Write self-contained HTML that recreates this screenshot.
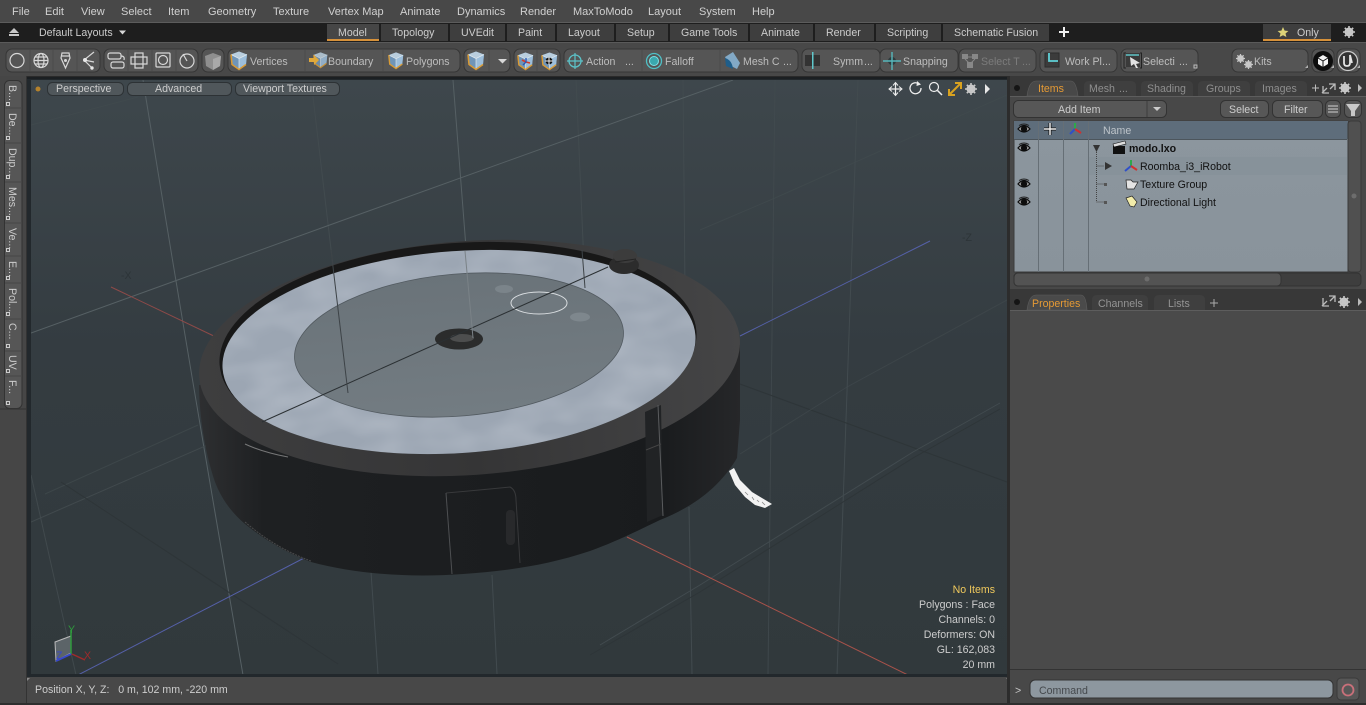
<!DOCTYPE html>
<html><head><meta charset="utf-8"><title>Modo</title>
<style>
html,body{margin:0;padding:0;background:#484848;overflow:hidden}
svg{display:block}
text{font-family:"Liberation Sans",sans-serif;font-size:10.6px;white-space:pre}
text:not([fill]):not([class]){fill:#cdcdcd}
.m{fill:#d0d0d0;font-size:11px}
.tb{fill:#bdbdbd}
.dim{fill:#7c7c7c}
.tab{fill:#cccccc}
.grp{fill:#555;stroke:#363636;stroke-width:1}
.sep{stroke:#4b4b4b;stroke-width:1}
.g{stroke:#566064;stroke-width:1;fill:none}
.gf{stroke:#424b4f;stroke-width:1;fill:none}
.gd{stroke:#2e3538;stroke-width:1;fill:none}
.ic{fill:none;stroke:#d8d8d8;stroke-width:1.2}
.r{fill:#111}
</style></head><body>
<svg width="1366" height="705" viewBox="0 0 1366 705" xmlns="http://www.w3.org/2000/svg">
<defs>
<linearGradient id="vp" x1="0" y1="0" x2="0" y2="1"><stop offset="0" stop-color="#3e474c"/><stop offset=".45" stop-color="#343c41"/><stop offset="1" stop-color="#31393c"/></linearGradient>
<linearGradient id="side" x1="0" y1="0" x2="1" y2="0"><stop offset="0" stop-color="#2e2f31"/><stop offset=".12" stop-color="#1e2022"/><stop offset=".85" stop-color="#191b1d"/><stop offset="1" stop-color="#262729"/></linearGradient>
<linearGradient id="rim" x1="0" y1="0" x2="1" y2="0"><stop offset="0" stop-color="#3e3e3f"/><stop offset=".5" stop-color="#353536"/><stop offset="1" stop-color="#454546"/></linearGradient>
<linearGradient id="disk" x1="0" y1="0" x2="0" y2="1"><stop offset="0" stop-color="#6a7379"/><stop offset="1" stop-color="#737c82"/></linearGradient>
<filter id="mot" x="0" y="0" width="1" height="1"><feTurbulence type="fractalNoise" baseFrequency=".02 .04" numOctaves="2" seed="4"/><feColorMatrix values="0 0 0 0 .72 0 0 0 0 .76 0 0 0 0 .82 0 0 0 .5 -.17"/><feComposite in2="SourceGraphic" operator="in"/></filter>
<linearGradient id="tbl" x1="0" y1="0" x2="0" y2="1"><stop offset="0" stop-color="#8c969e"/><stop offset="1" stop-color="#89939b"/></linearGradient>
<symbol id="cube" viewBox="0 0 20 20" overflow="visible">
<polygon points="10,1 18,4 17,14 10,19 3,14 2,4" fill="#6f95b8"/>
<polygon points="10,8 18,4 17,14 10,19" fill="#9cbedb"/>
<polygon points="10,1 18,4 10,8 2,4" fill="#b9cede"/>
<path d="M10,8 L10,19 M10,8 L2,4 M10,8 L18,4" stroke="#dfe8ee" stroke-width=".7" fill="none"/>
<path d="M2,4 L3,14 L10,19 L17,14" stroke="#d99b35" stroke-width="1.5" fill="none"/>
</symbol>
<symbol id="eye" viewBox="0 0 14 10" overflow="visible">
<path d="M1,5 Q7,-2 13,5 Q7,11 1,5Z" fill="#a8a8a8" stroke="#0d0d0d" stroke-width="1.2"/>
<circle cx="7" cy="5" r="3.200" fill="#0d0d0d"/><path d="M2,1.500Q7,-1.500 12,1.500" stroke="#222" fill="none"/>
</symbol>
<symbol id="gear" viewBox="0 0 12 12" overflow="visible">
<circle cx="6" cy="6" r="3.400" fill="none" stroke="#c8c8c8" stroke-width="2.200"/>
<path d="M6,0V12M0,6H12M1.800,1.800L10.200,10.200M10.200,1.800L1.800,10.200" stroke="#c8c8c8" stroke-width="1.600"/>
</symbol>
</defs>

<!-- base -->
<rect width="1366" height="705" fill="#484848"/>
<rect x="0" y="22" width="1366" height="1" fill="#5c5c5c"/>

<!-- menu -->
<g>
<text class="m" x="12" y="15">File</text>
<text class="m" x="45" y="15">Edit</text>
<text class="m" x="81" y="15">View</text>
<text class="m" x="121" y="15">Select</text>
<text class="m" x="168" y="15">Item</text>
<text class="m" x="208" y="15">Geometry</text>
<text class="m" x="273" y="15">Texture</text>
<text class="m" x="328" y="15">Vertex Map</text>
<text class="m" x="400" y="15">Animate</text>
<text class="m" x="457" y="15">Dynamics</text>
<text class="m" x="520" y="15">Render</text>
<text class="m" x="573" y="15">MaxToModo</text>
<text class="m" x="648" y="15">Layout</text>
<text class="m" x="699" y="15">System</text>
<text class="m" x="752" y="15">Help</text>
</g>

<!-- tab bar -->
<rect x="0" y="23" width="1366" height="19" fill="#1e1e1e"/>
<rect x="0" y="42" width="1366" height="1" fill="#5a5a5a"/>
<path d="M14,28 L19,33 H9Z M9,34H19V36H9Z" fill="#c8c8c8"/>
<text class="tab" x="39" y="36">Default Layouts</text>
<path d="M119,30.500H126L122.500,34.500Z" fill="#d8d8d8"/>
<rect x="327" y="24" width="52" height="15" fill="#464646"/>
<rect x="327" y="39" width="52" height="2" fill="#d6913a"/>
<g fill="#3e3e3e">
<rect x="381" y="24" width="67" height="17"/>
<rect x="450" y="24" width="55" height="17"/>
<rect x="507" y="24" width="48" height="17"/>
<rect x="557" y="24" width="57" height="17"/>
<rect x="616" y="24" width="52" height="17"/>
<rect x="670" y="24" width="78" height="17"/>
<rect x="750" y="24" width="63" height="17"/>
<rect x="815" y="24" width="59" height="17"/>
<rect x="876" y="24" width="65" height="17"/>
<rect x="943" y="24" width="106" height="17"/>
</g>
<text class="tab" x="338" y="36">Model</text>
<text class="tab" x="392" y="36">Topology</text>
<text class="tab" x="461" y="36">UVEdit</text>
<text class="tab" x="518" y="36">Paint</text>
<text class="tab" x="568" y="36">Layout</text>
<text class="tab" x="627" y="36">Setup</text>
<text class="tab" x="681" y="36">Game Tools</text>
<text class="tab" x="761" y="36">Animate</text>
<text class="tab" x="826" y="36">Render</text>
<text class="tab" x="887" y="36">Scripting</text>
<text class="tab" x="954" y="36">Schematic Fusion</text>
<path d="M1064,27V37M1059,32H1069" stroke="#f0f0f0" stroke-width="2"/>
<rect x="1263" y="24" width="68" height="15" fill="#3e3e3e"/>
<rect x="1263" y="39" width="68" height="2" fill="#d6913a"/>
<path d="M1283,27L1284.600,30.600L1288.400,31L1285.500,33.500L1286.400,37L1283,35.200L1279.600,37L1280.500,33.500L1277.600,31L1281.400,30.600Z" fill="#dcd277"/>
<text class="tab" x="1297" y="36">Only</text>
<use href="#gear" x="1343" y="26" width="12" height="12"/>

<!-- toolbar -->
<rect x="0" y="43" width="1366" height="33" fill="#484848"/>
<rect x="0" y="76" width="1366" height="3" fill="#2a2a2a"/>
<g>
<rect class="grp" x="6" y="49" width="94" height="23" rx="6"/>
<rect class="grp" x="104" y="49" width="94" height="23" rx="6"/>
<rect class="grp" x="202" y="49" width="22" height="23" rx="6"/>
<rect class="grp" x="228" y="49" width="232" height="23" rx="6"/>
<rect class="grp" x="464" y="49" width="46" height="23" rx="6"/>
<rect class="grp" x="514" y="49" width="46" height="23" rx="6"/>
<rect class="grp" x="564" y="49" width="234" height="23" rx="6"/>
<rect class="grp" x="802" y="49" width="78" height="23" rx="6"/>
<rect class="grp" x="880" y="49" width="78" height="23" rx="6"/>
<rect class="grp" x="959" y="49" width="77" height="23" rx="6"/>
<rect class="grp" x="1040" y="49" width="77" height="23" rx="6"/>
<rect class="grp" x="1121" y="49" width="77" height="23" rx="6"/>
<rect class="grp" x="1232" y="49" width="76" height="23" rx="6"/>
<rect class="grp" x="1312" y="49" width="22" height="23" rx="6"/>
<rect class="grp" x="1337" y="49" width="23" height="23" rx="6"/>
</g>
<path class="sep" d="M30,50V71M53,50V71M77,50V71M128,50V71M152,50V71M176,50V71M305,50V71M383,50V71M489,50V71M537,50V71M642,50V71M720,50V71"/>
<!-- tool icons -->
<circle class="ic" cx="17" cy="60.500" r="7"/>
<circle class="ic" cx="41" cy="60.500" r="7"/><ellipse class="ic" cx="41" cy="60.500" rx="3" ry="7" stroke-width=".8"/><path class="ic" stroke-width=".8" d="M34,60.500H48M35,57H47M35,64H47"/>
<path class="ic" d="M62,53H69L70,58L65.500,68L61,58Z M62,56H69"/><circle cx="65.500" cy="60.500" r="1.500" fill="#d8d8d8"/>
<path class="ic" d="M94,52L84,60L92,68M84,60L94,62"/><circle cx="85" cy="60" r="2" fill="#e8e8e8"/><circle cx="92" cy="68" r="1.700" fill="#e8e8e8"/>
<rect class="ic" x="108" y="53" width="13" height="6" rx="2"/><rect class="ic" x="111" y="62" width="13" height="6" rx="2"/><path class="ic" d="M121,56Q125,56 124,60"/>
<path class="ic" d="M135,53H143V57H147V64H143V68H135V64H131V57H135ZM135,57H143V64H135Z"/>
<rect class="ic" x="156" y="53" width="14" height="14" rx="1"/><circle class="ic" cx="163" cy="60" r="4.500"/>
<circle class="ic" cx="187" cy="61" r="7"/><path class="ic" d="M187,61L183,54"/>
<polygon points="213,53 221,56 220,66 213,70 206,66 205,56" fill="#8f8f8f"/><polygon points="213,59 221,56 220,66 213,70" fill="#a9a9a9"/>
<use href="#cube" x="229" y="50" width="20" height="21"/>
<text class="tb" x="250" y="65">Vertices</text>
<use href="#cube" x="312" y="50" width="17" height="20" opacity=".85"/>
<path d="M309,58h5v-3l5,5l-5,5v-3h-5z" fill="#e0a83a"/>
<text class="tb" x="328" y="65">Boundary</text>
<use href="#cube" x="387" y="50" width="18" height="21"/>
<text class="tb" x="406" y="65">Polygons</text>
<use href="#cube" x="466" y="50" width="20" height="21"/>
<path d="M498,59H507L502.500,63.500Z" fill="#d8d8d8"/>
<use href="#cube" x="516" y="51" width="19" height="20"/>
<use href="#cube" x="540" y="51" width="19" height="20"/>
<path d="M522,60l4,2l4,1" stroke="#d43a2a" stroke-width="1.600" fill="none"/><path d="M526,58v4l-3,3" stroke="#2858b8" stroke-width="1.400" fill="none"/>
<circle cx="549" cy="61" r="3.500" fill="#111"/><path d="M545,61h8M549,57v8" stroke="#eee" stroke-width="1"/>
<circle cx="575" cy="61" r="6" fill="none" stroke="#5cc3c9" stroke-width="1.300"/><path d="M575,53V69M567,61H583" stroke="#5cc3c9" stroke-width="1.200"/>
<text class="tb" x="586" y="65">Action</text><text class="tb" x="625" y="65">...</text>
<circle cx="654" cy="61" r="7.500" fill="none" stroke="#4fc0c6" stroke-width="1.300"/><circle cx="654" cy="61" r="4.500" fill="#3aa8ae" stroke="#7fe0e4"/>
<text class="tb" x="665" y="65">Falloff</text>
<path d="M725,57L733,52L740,63L737,69L729,65Z" fill="#82a9c6"/><path d="M725,58Q732,60 733,69L726,66Z" fill="#1e5d89"/>
<text class="tb" x="743" y="65">Mesh C</text><text class="tb" x="783" y="65">...</text>
<rect x="805" y="55" width="15" height="11" fill="#333"/><rect x="812" y="52" width="1.500" height="17" fill="#5fc8cc"/>
<text class="tb" x="833" y="65">Symm</text><text class="tb" x="864" y="65">...</text>
<circle cx="892" cy="61" r="4" fill="#2f3a3c"/><path d="M883,61H901M892,52V70" stroke="#56b7bc" stroke-width="1.400"/>
<text class="tb" x="903" y="65">Snapping</text>
<path d="M962,54h6v5h-6zM972,54h6v5h-6zM967,62h6v6h-6z" fill="#888"/><path d="M968,57h4M965,59l4,4M975,59l-4,4" stroke="#888"/>
<text class="dim" x="981" y="65">Select T</text><text class="dim" x="1022" y="65">...</text>
<rect x="1045" y="53" width="14" height="14" fill="#3b3b3b" stroke="#2c2c2c"/><path d="M1049,53v8h9" stroke="#5fd0d6" stroke-width="1.800" fill="none"/>
<text class="tb" x="1065" y="65">Work Pl</text><text class="tb" x="1102" y="65">...</text>
<path d="M1126,53h-2v15h2M1140,53h1.500v15h-1.500" stroke="#222" fill="none"/><rect x="1126" y="53" width="14" height="14" fill="#3a3a3a"/><path d="M1126,55h13" stroke="#60c4c8" stroke-width="1.500"/><path d="M1130,57l10,6l-4,1l2,4l-2,0l-2,-4l-3,2Z" fill="#e2e2e2"/>
<text class="tb" x="1143" y="65">Selecti</text><text class="tb" x="1179" y="65">...</text>
<use href="#gear" x="1236" y="54" width="9" height="9"/><use href="#gear" x="1244" y="60" width="9" height="9"/>
<text class="tb" x="1254" y="65">Kits</text>
<circle cx="1323" cy="61" r="10" fill="#0d0d0d"/><path d="M1323,55l5,3v6l-5,3l-5,-3v-6Z" fill="#f4f4f4"/><path d="M1323,61v6M1323,61l-5,-3M1323,61l5,-3" stroke="#111"/>
<circle cx="1348" cy="61" r="9.500" fill="#333" stroke="#ccc" stroke-width="1.200"/>
<path d="M1344,56v7q0,3 3,3q3,0 3,-3v-8q1,4 2,8" stroke="#e4e4e4" stroke-width="1.800" fill="none"/>
<path d="M1305,68h3v-3z M1331,68h3v-3z M1357,68h3v-3z" fill="#b0b0b0"/>
<rect x="1194" y="65" width="3" height="3" fill="none" stroke="#bbb"/>

<!-- left sidebar -->
<rect x="0" y="76" width="26" height="627" fill="#464646"/>
<rect x="26" y="76" width="1" height="627" fill="#333"/>
<rect x="4.500" y="80.500" width="17.500" height="328" rx="5" fill="#565656" stroke="#333"/>
<path stroke="#464646" d="M5,108H22M5,143H22M5,182H22M5,223H22M5,256H22M5,283H22M5,319H22M5,351H22M5,376H22"/>
<path d="M0,409H26" stroke="#333"/>
<g>
<text transform="translate(9,85) rotate(90)">B...</text>
<text transform="translate(9,113) rotate(90)">De...</text>
<text transform="translate(9,148) rotate(90)">Dup...</text>
<text transform="translate(9,187) rotate(90)">Mes...</text>
<text transform="translate(9,228) rotate(90)">Ve...</text>
<text transform="translate(9,261) rotate(90)">E...</text>
<text transform="translate(9,288) rotate(90)">Pol...</text>
<text transform="translate(9,323) rotate(90)">C...</text>
<text transform="translate(9,355) rotate(90)">UV</text>
<text transform="translate(9,380) rotate(90)">F...</text>
</g>
<path fill="none" stroke="#ccc" d="M6.500,102.500h3v3h-3zM6.500,136.500h3v3h-3zM6.500,175.500h3v3h-3zM6.500,216.500h3v3h-3zM6.500,248.500h3v3h-3zM6.500,276.500h3v3h-3zM6.500,312.500h3v3h-3zM6.500,344.500h3v3h-3zM6.500,369.500h3v3h-3zM6.500,401.500h3v3h-3z"/>

<!-- viewport -->
<rect x="27" y="77" width="983" height="600" fill="#22282c"/>
<rect x="27" y="77" width="983" height="2" fill="#1b1f22"/>
<rect x="31" y="80" width="976" height="594" fill="url(#vp)"/>
<svg x="31" y="80" width="976" height="594" viewBox="31 80 976 594">
<g>
<path class="g" d="M143,80Q190,370 243,675"/>
<path class="gf" d="M311,80L348,393"/>
<path class="g" d="M453,80L473,338"/>
<path class="gf" d="M576,80L585,288"/>
<path class="gf" d="M683,80L685,290"/>
<path class="gf" d="M775,80L768,675" opacity=".8"/>
<path class="gf" d="M858,80L837,675"/>
<path class="gf" d="M689,507L692,674"/>
<path class="gf" d="M492,575L497,674"/>
<path class="gf" d="M371,572L378,674"/>
<path class="g" d="M31,333L338,222L733,80"/>
<path class="gf" d="M31,125L138,97" opacity=".7"/>
<path class="gf" d="M700,230L775,198L887,148L1007,95" opacity=".7"/>
<path class="gf" d="M31,522L235,433" opacity=".9"/>
<path class="gf" d="M45,494L198,425" opacity=".7"/>
<path class="gf" d="M31,475L76,675" opacity=".9"/>
<path class="gd" d="M61,482L338,664"/>
<path class="gd" d="M740,384L1007,482"/>
<path class="gf" d="M740,454L847,387L1007,300" opacity=".6"/>
<path class="gf" d="M600,645L700,585L913,452L1000,403"/>
<path class="gd" d="M590,655L700,592L913,458L1000,409"/>
<path d="M78,675L308,556" stroke="#5560a8" stroke-width="1" fill="none"/>
<path d="M740,336L930,241" stroke="#5560a8" stroke-width="1" fill="none"/>
<path d="M111,287L218,338" stroke="#8e4a48" stroke-width="1" fill="none"/>
<path d="M627,537L908,675" stroke="#a8524a" stroke-width="1" fill="none"/>
<text x="121" y="279" fill="#2d3438">-X</text>
<text x="962" y="241" fill="#2d3438">-Z</text>
</g>

<!-- robot -->
<path d="M199,385 C199,410 204,450 215,482 C222,500 232,513 245,524 C265,540 285,552 311,562 C355,574 410,578 463,574 C505,571 545,566 590,551 C615,542 635,532 660,520 C690,508 718,490 737,458 L740,420 L740,345 Z" fill="url(#side)"/>
<ellipse cx="469.500" cy="358" rx="271" ry="117" transform="rotate(-4 469.500 358)" fill="url(#rim)"/>
<path d="M245,444Q262,452 288,457" stroke="#b0b0b0" stroke-width="1" fill="none" opacity=".6"/>
<path d="M245,522Q275,548 311,561" stroke="#666" stroke-width="1" fill="none" opacity=".6" stroke-dasharray="2,1"/>
<ellipse cx="458" cy="348" rx="239" ry="105" transform="rotate(-4 458 348)" fill="#181818"/>
<ellipse cx="459" cy="352" rx="237" ry="101" transform="rotate(-4 459 352)" fill="#9ca6b3"/>
<ellipse cx="459" cy="352" rx="237" ry="101" transform="rotate(-4 459 352)" fill="#fff" filter="url(#mot)"/>
<ellipse cx="459" cy="345" rx="165" ry="71" transform="rotate(-5 459 345)" fill="url(#disk)" stroke="#525a60" stroke-width=".8"/>
<ellipse cx="504" cy="289" rx="9" ry="4" fill="#7b848a"/><ellipse cx="580" cy="317" rx="10" ry="4.500" fill="#7e878d"/>
<ellipse cx="539" cy="303" rx="28" ry="11" fill="#6f787e" stroke="#d9dde0" stroke-width="1"/>
<ellipse cx="459" cy="339" rx="24" ry="10.500" fill="#2b2c2c"/><ellipse cx="462" cy="338" rx="12" ry="4" fill="#4d4e4e"/>
<!-- knob -->
<ellipse cx="624" cy="265" rx="15" ry="9" fill="#2c2c2c"/><ellipse cx="625" cy="256" rx="12" ry="7" fill="#3c3c3c"/><path d="M615,262L636,259" stroke="#242424" stroke-width="1"/>
<!-- seams -->
<path d="M262,422L608,267" stroke="#2b3033" stroke-width="1" fill="none"/>
<path d="M331,250L348,393" stroke="#3d4347" stroke-width="1" fill="none"/>
<path d="M465,251L473,338" stroke="#7a8287" stroke-width="1" fill="none"/>
<path d="M582,250L585,288" stroke="#3d4347" stroke-width="1" fill="none"/>
<path d="M446,493Q480,490 510,487Q516,490 516,500L520,563" stroke="#38393b" stroke-width="1" fill="none"/>
<path d="M446,493L452,574" stroke="#4e5052" stroke-width="1" fill="none"/>
<rect x="506" y="510" width="9" height="35" rx="4" fill="#28292b"/>
<path d="M645,412L661,405L663,515L647,522Z" fill="#212325"/>
<path d="M658,405L663,516" stroke="#5a5c5e" stroke-width="1" fill="none"/>
<path d="M646,450L661,444" stroke="#444" stroke-width="1" fill="none"/>
<!-- brush -->
<path d="M729,471L734,468L740,480L752,492L772,504L765,508L755,505L745,497L735,485Z" fill="#f2f2f2"/>
<path d="M745,492l3,3M752,497l2,3M757,500l2,2M762,502l3,3" stroke="#8a8a8a" stroke-width=".8"/>
</svg>

<!-- viewport overlay controls -->
<circle cx="38" cy="89" r="2.500" fill="#b5822c"/>
<g fill="#50575b" stroke="#2d3235">
<rect x="47.500" y="82.500" width="76" height="13" rx="5"/>
<rect x="127.500" y="82.500" width="104" height="13" rx="5"/>
<rect x="235.500" y="82.500" width="104" height="13" rx="5"/>
</g>
<text x="56" y="92">Perspective</text>
<text x="155" y="92">Advanced</text>
<text x="243" y="92">Viewport Textures</text>
<path d="M895.500,83V95M889.500,89H901.500" stroke="#eee" stroke-width="1.300"/><path d="M893,85.500L895.500,82.500L898,85.500M893,92.500L895.500,95.500L898,92.500M892,86.500L889,89L892,91.500M899,86.500L902,89L899,91.500" fill="none" stroke="#eee"/>
<path d="M919,84A5.500,5.500 0 1 0 921,88" stroke="#eee" stroke-width="1.300" fill="none"/><path d="M917,81L921,84.500L916.500,86Z" fill="#eee"/>
<circle cx="934" cy="87" r="4.500" stroke="#eee" stroke-width="1.200" fill="none"/><path d="M937.500,90.500L942,95" stroke="#eee" stroke-width="1.500"/>
<path d="M949,95L960,84M955,83H961V89M949,89V95H955" stroke="#d9a21f" stroke-width="2" fill="none"/>
<use href="#gear" x="965" y="83" width="12" height="12"/>
<path d="M985,84L990,89L985,94Z" fill="#e8e8e8"/>

<!-- info -->
<text x="995" y="593" text-anchor="end" fill="#f0c95c">No Items</text>
<text x="995" y="608" text-anchor="end">Polygons : Face</text>
<text x="995" y="623" text-anchor="end">Channels: 0</text>
<text x="995" y="638" text-anchor="end">Deformers: ON</text>
<text x="995" y="653" text-anchor="end">GL: 162,083</text>
<text x="995" y="668" text-anchor="end">20 mm</text>

<!-- axis gizmo -->
<path d="M55,642L71,636V653L56,661Z" fill="#5c6468" stroke="#bbb" stroke-width="1"/>
<path d="M71,654V630" stroke="#2f9a3c" stroke-width="1.500"/><path d="M71,654L56,661" stroke="#3848c8" stroke-width="2"/><path d="M72,654L85,660" stroke="#a02a2a" stroke-width="1.500"/>
<text x="68" y="633" fill="#2f9a3c">Y</text>
<text x="56" y="659" fill="#3848c8">Z</text>
<text x="84" y="659" fill="#a02a2a">X</text>

<!-- status -->
<rect x="27" y="677" width="983" height="26" fill="#484848"/>
<path d="M27,678h3l-3,3z" fill="#8a8a8a"/><path d="M1009,678h-3l3,3z" fill="#8a8a8a"/>
<text x="35" y="693">Position X, Y, Z:   0 m, 102 mm, -220 mm</text>
<rect x="0" y="703" width="1366" height="2" fill="#2e2e2e"/>

<!-- right panel -->
<rect x="1007" y="76" width="3" height="627" fill="#2c2c2c"/>
<rect x="1010" y="76" width="356" height="21" fill="#383838"/>
<rect x="1010" y="96" width="356" height="193" fill="#484848"/>
<rect x="1010" y="96" width="356" height="1" fill="#5d5d5d"/>
<circle cx="1017" cy="88" r="3" fill="#151515"/>
<path d="M1027,96Q1029,81 1036,81H1071Q1076,81 1078,96Z" fill="#484848" stroke="#5d5d5d" stroke-width=".6"/>
<g fill="#3f3f3f">
<path d="M1084,96V86Q1084,81 1089,81H1131Q1136,81 1136,86V96Z"/>
<path d="M1141,96V86Q1141,81 1146,81H1188Q1193,81 1193,86V96Z"/>
<path d="M1198,96V86Q1198,81 1203,81H1245Q1250,81 1250,86V96Z"/>
<path d="M1255,96V86Q1255,81 1260,81H1302Q1307,81 1307,86V96Z"/>
</g>
<text x="1038" y="92" fill="#e59a35">Items</text>
<text x="1089" y="92" fill="#8e8e8e">Mesh</text><text x="1119" y="92" fill="#8e8e8e">...</text>
<text x="1147" y="92" fill="#8e8e8e">Shading</text>
<text x="1206" y="92" fill="#8e8e8e">Groups</text>
<text x="1262" y="92" fill="#8e8e8e">Images</text>
<path d="M1312,88h7M1315.500,84.500v7" stroke="#bbb"/>
<path d="M1323,86v7h6M1322,93l5,-5M1329,84h6v6M1335,84l-5,5" stroke="#bbb" fill="none" stroke-width="1.300"/>
<use href="#gear" x="1339" y="82" width="12" height="12"/>
<path d="M1358,84L1362,88L1358,92Z" fill="#bbb"/>

<rect x="1013.500" y="100.500" width="153" height="17" rx="5" fill="#575757" stroke="#333"/>
<path d="M1147,101V117" stroke="#3c3c3c"/>
<text x="1058" y="113">Add Item</text>
<path d="M1153,107H1161L1157,111Z" fill="#ccc"/>
<rect x="1220.500" y="100.500" width="48" height="17" rx="5" fill="#575757" stroke="#333"/>
<text x="1229" y="113">Select</text>
<rect x="1272.500" y="100.500" width="50" height="17" rx="5" fill="#575757" stroke="#333"/>
<text x="1284" y="113">Filter</text>
<rect x="1325.500" y="100.500" width="15" height="17" rx="5" fill="#575757" stroke="#333"/>
<path d="M1328,106h10M1328,109h10M1328,112h10" stroke="#d0d0d0"/>
<rect x="1344.500" y="100.500" width="17" height="17" rx="5" fill="#575757" stroke="#333"/>
<path d="M1346,104H1360L1355,111V116L1351,116V111Z" fill="#c8c8c8"/>

<rect x="1014" y="121" width="334" height="151" fill="url(#tbl)" stroke="#3b3b3b"/>
<rect x="1014" y="121" width="334" height="18" fill="#5e6d7b"/>
<rect x="1014" y="139" width="333" height="1" fill="#4c555c"/>
<rect x="1089" y="157" width="258" height="18" fill="#87929a"/>
<path d="M1038.500,121V272M1063.500,121V272M1088.500,121V272" stroke="#666f76"/>
<text x="1103" y="134" fill="#bcc3c9">Name</text>
<use href="#eye" x="1017" y="124" width="14" height="10"/>
<use href="#eye" x="1017" y="143" width="14" height="10"/>
<use href="#eye" x="1017" y="179" width="14" height="10"/>
<use href="#eye" x="1017" y="197" width="14" height="10"/>
<path d="M1050,123V135M1044,129H1056" stroke="#111" stroke-width="3"/><path d="M1050,123V135M1044,129H1056" stroke="#eee" stroke-width="1.500"/>
<path d="M1075,129V123" stroke="#2ea84a" stroke-width="2"/><path d="M1075,129L1070,134" stroke="#3050c8" stroke-width="2"/><path d="M1075,129L1081,133" stroke="#d03030" stroke-width="2"/>
<path d="M1093,145H1100L1096.500,152Z" fill="#333"/>
<path d="M1096.500,152V202M1096.500,166H1104M1096.500,184H1104M1096.500,202H1104" stroke="#444" stroke-dasharray="1,1" fill="none"/>
<path d="M1105,162L1112,166L1105,170Z" fill="#333"/>
<rect x="1104" y="183" width="3" height="3" fill="#555"/><rect x="1104" y="201" width="3" height="3" fill="#555"/>
<rect x="1113" y="146" width="12" height="8" fill="#111"/><path d="M1113,144L1125,141L1126,144L1114,147Z" fill="#ddd" stroke="#111" stroke-width=".6"/>
<text x="1129" y="152" class="r" style="font-weight:bold">modo.lxo</text>
<path d="M1131,166V160" stroke="#2ea84a" stroke-width="2"/><path d="M1131,166L1125,171" stroke="#3050c8" stroke-width="2"/><path d="M1131,166L1137,170" stroke="#d03030" stroke-width="2"/>
<text x="1140" y="170" class="r">Roomba_i3_iRobot</text>
<path d="M1126,180H1131L1133,182H1138L1134,189H1127Z" fill="#e4e4e4" stroke="#222" stroke-width=".7"/>
<text x="1140" y="188" class="r">Texture Group</text>
<path d="M1126,198L1132,196L1137,202L1134,207L1130,206Z" fill="#f2ecaa" stroke="#222" stroke-width=".7"/>
<text x="1140" y="206" class="r">Directional Light</text>

<rect x="1348" y="121" width="13" height="151" rx="3" fill="#505050" stroke="#3a3a3a"/>
<circle cx="1354" cy="196" r="2.500" fill="#6d6d6d"/>
<rect x="1014" y="273" width="347" height="13" rx="4" fill="#3e3e3e" stroke="#333"/>
<rect x="1014" y="273" width="267" height="13" rx="4" fill="#535353" stroke="#333"/>
<circle cx="1147" cy="279" r="2.500" fill="#6d6d6d"/>

<rect x="1010" y="289" width="356" height="22" fill="#383838"/>
<rect x="1010" y="310" width="356" height="359" fill="#4a4a4a"/>
<rect x="1010" y="310" width="356" height="1" fill="#5d5d5d"/>
<circle cx="1017" cy="302" r="3" fill="#151515"/>
<path d="M1027,310Q1029,295 1036,295H1081Q1086,295 1087,310Z" fill="#4a4a4a" stroke="#5d5d5d" stroke-width=".6"/>
<path d="M1092,310V300Q1092,295 1097,295H1143Q1148,295 1148,300V310Z" fill="#3f3f3f"/>
<path d="M1154,310V300Q1154,295 1159,295H1200Q1205,295 1205,300V310Z" fill="#3f3f3f"/>
<text x="1032" y="307" fill="#e59a35">Properties</text>
<text x="1098" y="307" fill="#949494">Channels</text>
<text x="1168" y="307" fill="#949494">Lists</text>
<path d="M1210,303h8M1214,299v8" stroke="#aaa"/>
<path d="M1323,298v8h6M1322,306l5,-5M1329,296h6v6M1335,296l-5,5" stroke="#bbb" fill="none" stroke-width="1.300"/>
<use href="#gear" x="1338" y="296" width="12" height="12"/>
<path d="M1358,298L1362,302L1358,306Z" fill="#bbb"/>

<!-- command -->
<rect x="1010" y="669" width="356" height="1" fill="#333"/>
<rect x="1010" y="670" width="356" height="33" fill="#484848"/>
<text x="1015" y="694" fill="#c8c8c8">&gt;</text>
<rect x="1030" y="680" width="303" height="18" rx="5" fill="#8d979f" stroke="#333"/>
<text x="1039" y="694" fill="#45494d">Command</text>
<rect x="1337" y="678" width="22" height="22" rx="4" fill="#575757" stroke="#3a3a3a"/>
<circle cx="1348" cy="690" r="5.500" fill="none" stroke="#c9707a" stroke-width="1.800"/>
</svg>
</body></html>
